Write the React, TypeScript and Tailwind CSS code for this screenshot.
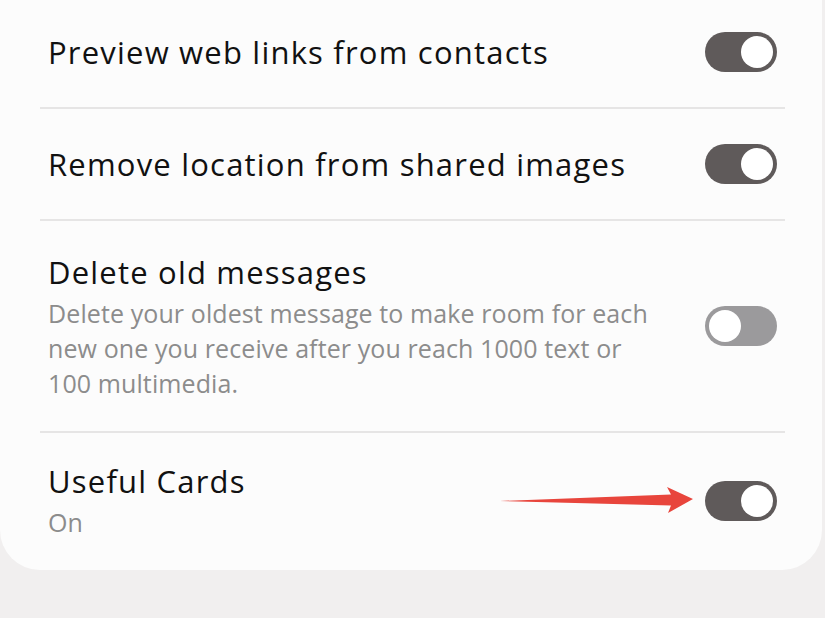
function Toggle({ on }: { on: boolean }) {
  return (
    <div
      className={
        on
          ? 'relative h-[40px] w-[72px] shrink-0 rounded-full bg-[#5f5a5a]'
          : 'relative h-[40px] w-[72px] shrink-0 rounded-full bg-[#9b9a9c]'
      }
    >
      <div
        className={
          on
            ? 'absolute right-[4px] top-[4px] h-[32px] w-[32px] rounded-full bg-white'
            : 'absolute left-[4px] top-[4px] h-[32px] w-[32px] rounded-full bg-white'
        }
      />
    </div>
  );
}

function Divider() {
  return <div className="h-[2px] bg-[#e6e5e5]" />;
}

const title = 'text-[31px] leading-[40px] tracking-[1.2px] text-[#111]';
const sub = 'mt-[4px] text-[25px] leading-[35px] tracking-[0.1px] text-[#8c8c8c]';

export default function App() {
  return (
    <div
      className="min-h-[618px] bg-[#f1efef]"
      style={{ fontFamily: '"Open Sans", Roboto, sans-serif' }}
    >
      <div className="relative mr-[3px] rounded-b-[40px] bg-[#fcfcfc] pl-[40px] pr-[37px]">
        {/* Preview web links */}
        <div className="flex h-[107px] items-center justify-between px-2 pb-[3px]">
          <span className={title}>Preview web links from contacts</span>
          <Toggle on />
        </div>
        <Divider />

        {/* Remove location */}
        <div className="flex h-[110px] items-center justify-between px-2">
          <span className={title}>Remove location from shared images</span>
          <Toggle on />
        </div>
        <Divider />

        {/* Delete old messages */}
        <div className="flex h-[210px] items-center justify-between px-2">
          <div className="flex flex-col">
            <span className={title}>Delete old messages</span>
            <span className={sub}>
              Delete your oldest message to make room for each
              <br />
              new one you receive after you reach 1000 text or
              <br />
              100 multimedia.
            </span>
          </div>
          <Toggle on={false} />
        </div>
        <Divider />

        {/* Useful Cards */}
        <div className="flex h-[137px] items-center justify-between px-2 pb-[2px]">
          <div className="flex flex-col">
            <span className={title}>Useful Cards</span>
            <span className={sub}>On</span>
          </div>
          <Toggle on />
        </div>

        {/* annotation arrow */}
        <svg
          className="pointer-events-none absolute left-0 top-0"
          width="825"
          height="618"
          viewBox="0 0 825 618"
        >
          <polygon
            points="500,501 671,494.5 667,487 693,499 668,513 671,505.5"
            fill="#e8453c"
          />
        </svg>
      </div>
    </div>
  );
}
